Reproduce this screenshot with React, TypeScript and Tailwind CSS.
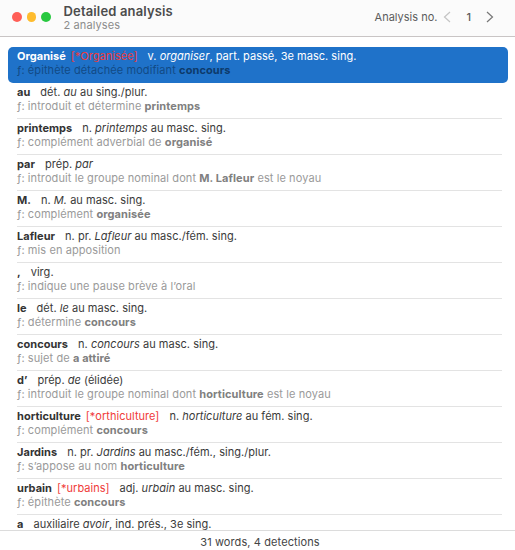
const rows: { w: string; err?: string; d: React.ReactNode; f: React.ReactNode }[] = [
  { w: "au", d: <>dét. <i>au</i> au sing./plur.</>, f: <>introduit et détermine <b>printemps</b></> },
  { w: "printemps", d: <>n. <i>printemps</i> au masc. sing.</>, f: <>complément adverbial de <b>organisé</b></> },
  { w: "par", d: <>prép. <i>par</i></>, f: <>introduit le groupe nominal dont <b>M. Lafleur</b> est le noyau</> },
  { w: "M.", d: <>n. <i>M.</i> au masc. sing.</>, f: <>complément <b>organisée</b></> },
  { w: "Lafleur", d: <>n. pr. <i>Lafleur</i> au masc./fém. sing.</>, f: <>mis en apposition</> },
  { w: ",", d: <>virg.</>, f: <>indique une pause brève à l’oral</> },
  { w: "le", d: <>dét. <i>le</i> au masc. sing.</>, f: <>détermine <b>concours</b></> },
  { w: "concours", d: <>n. <i>concours</i> au masc. sing.</>, f: <>sujet de <b>a attiré</b></> },
  { w: "d’", d: <>prép. <i>de</i> (élidée)</>, f: <>introduit le groupe nominal dont <b>horticulture</b> est le noyau</> },
  { w: "horticulture", err: "[*orthiculture]", d: <>n. <i>horticulture</i> au fém. sing.</>, f: <>complément <b>concours</b></> },
  { w: "Jardins", d: <>n. pr. <i>Jardins</i> au masc./fém., sing./plur.</>, f: <>s’appose au nom <b>horticulture</b></> },
  { w: "urbain", err: "[*urbains]", d: <>adj. <i>urbain</i> au masc. sing.</>, f: <>épithète <b>concours</b></> },
];

function Row({ r }: { r: (typeof rows)[number] }) {
  return (
    <div className="ml-[9px] pl-2 pr-[4px] mr-[9px] h-9 pt-[2px] shrink-0">
      <div className="h-[14px] leading-[14px] whitespace-nowrap text-[#3a3a3a] tracking-[0.03px]">
        <b className="text-[#333]">{r.w}</b>
        {r.err && <span className="text-[#f03a3a] ml-[5px]">{r.err}</span>}
        <span className="ml-[10px]">{r.d}</span>
      </div>
      <div className="h-[14px] leading-[14px] whitespace-nowrap text-[#9a9a9a] tracking-[0.09px] [&_b]:text-[#808080]">
        ƒ: {r.f}
      </div>
      <div className="h-px bg-[#e3e3e3] mt-[5px]" />
    </div>
  );
}

export default function App() {
  return (
    <div className="w-[515px] h-[550px] bg-white flex flex-col overflow-hidden text-[11px] font-['Inter','Liberation_Sans',sans-serif]">
      <header className="h-[37px] shrink-0 flex items-center border-b border-[#c9c5c5] bg-[#fbfbfb] pl-3 pr-[21px] pb-[2px]">
        <div className="flex gap-[5px]">
          <span className="w-[9.5px] h-[9.5px] rounded-full bg-[#ff5f57]" />
          <span className="w-[9.5px] h-[9.5px] rounded-full bg-[#febc2e]" />
          <span className="w-[9.5px] h-[9.5px] rounded-full bg-[#28c840]" />
        </div>
        <div className="ml-[13px]">
          <div className="text-[13px] leading-[16px] font-semibold text-[#4c4c4c] tracking-[0.15px]">Detailed analysis</div>
          <div className="text-[11px] leading-[13px] text-[#8c8c8c] tracking-[0.1px]">2 analyses</div>
        </div>
        <div className="ml-auto flex items-center text-[#5c5c5c]">
          <span>Analysis no.</span>
          <svg width="8" height="12" viewBox="0 0 8 12" className="ml-[6px]" fill="none" stroke="#c4c4c4" strokeWidth="1.2"><path d="M7 1 1.5 6 7 11" /></svg>
          <span className="ml-[15px] font-medium">1</span>
          <svg width="8" height="12" viewBox="0 0 8 12" className="ml-[15px]" fill="none" stroke="#777" strokeWidth="1.2"><path d="M1 1l5.5 5L1 11" /></svg>
        </div>
      </header>
      <main className="flex-1 min-h-0 overflow-hidden flex flex-col pt-[10px]">
        <div className="ml-2 mr-[7px] h-9 shrink-0 rounded-[5px] bg-[#1f72c9] pl-[9px] pt-[2px] whitespace-nowrap">
          <div className="h-[14px] leading-[14px] text-white tracking-[0.03px]">
            <b>Organisé</b>
            <span className="text-[#f03a3a] ml-[5px]">[*Organisée]</span>
            <span className="ml-[10px]">v. <i>organiser</i>, part. passé, 3e masc. sing.</span>
          </div>
          <div className="h-[14px] leading-[14px] text-[#124a85] tracking-[0.09px] [&_b]:text-[#0d3a6b]">
            ƒ: épithète détachée modifiant <b>concours</b>
          </div>
        </div>
        {rows.map((r) => <Row key={r.w} r={r} />)}
        <div className="ml-[9px] pl-2 pt-[2px] shrink-0">
          <div className="leading-[14px] whitespace-nowrap text-[#3a3a3a] tracking-[0.03px]">
            <b className="text-[#333]">a</b>
            <span className="ml-[10px]">auxiliaire <i>avoir</i>, ind. prés., 3e sing.</span>
          </div>
        </div>
      </main>
      <footer className="h-[20px] shrink-0 border-t border-[#dcdcdc] bg-white flex items-center justify-center text-[#444] pt-[3px] pl-[5px] tracking-[0.1px]">
        31 words, 4 detections
      </footer>
    </div>
  );
}
